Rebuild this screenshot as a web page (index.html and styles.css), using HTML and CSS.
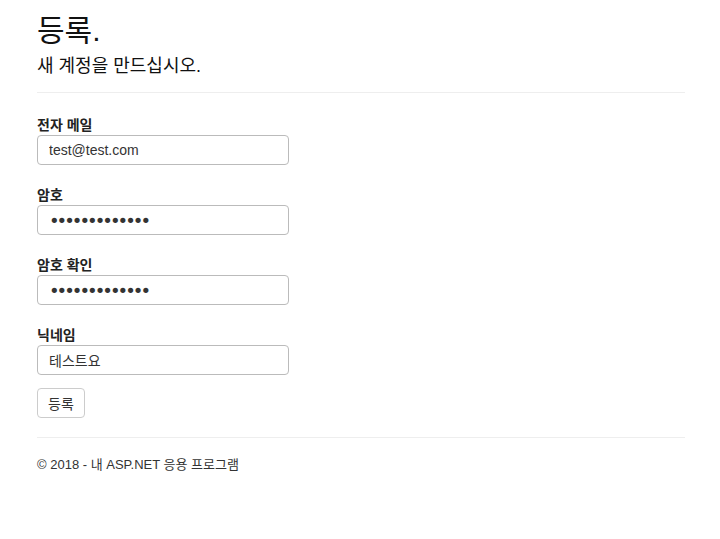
FILE: index.html
```html
<!DOCTYPE html>
<html lang="ko">
<head>
    <meta charset="UTF-8">
    <meta name="viewport" content="width=device-width, initial-scale=1.0">
    <title>등록 - 내 ASP.NET 응용 프로그램</title>
    <link rel="stylesheet" href="styles.css">
</head>
<body>
    <div class="container">
        <h2 class="title">등록.</h2>
        <h4 class="subtitle">새 계정을 만드십시오.</h4>
        <hr>
        <form class="register-form" onsubmit="return false">
            <div class="form-group">
                <label for="Email">전자 메일</label>
                <input class="form-control" type="text" id="Email" value="test@test.com">
            </div>
            <div class="form-group">
                <label for="Password">암호</label>
                <input class="form-control password" type="password" id="Password" value="abcdefghijklm">
            </div>
            <div class="form-group">
                <label for="ConfirmPassword">암호 확인</label>
                <input class="form-control password" type="password" id="ConfirmPassword" value="abcdefghijklm">
            </div>
            <div class="form-group last">
                <label for="NickName">닉네임</label>
                <input class="form-control" type="text" id="NickName" value="테스트요">
            </div>
            <button type="submit" class="btn">등록</button>
        </form>
        <hr class="footer-line">
        <footer>
            <p>&copy; 2018 - 내 ASP.NET 응용 프로그램</p>
        </footer>
    </div>
</body>
</html>
```

FILE: styles.css
```css
body {
    font-family: "Liberation Sans", "Noto Sans CJK KR", sans-serif;
    font-size: 14px;
    line-height: 20px;
    color: #333;
    background: #fff;
    margin: 0;
}
.container {
    width: 648px;
    margin-left: 37px;
}
.title {
    font-size: 30px;
    font-weight: normal;
    line-height: 33px;
    color: #111;
    margin: 14px 0 0;
}
.subtitle {
    font-size: 18px;
    font-weight: normal;
    line-height: 20px;
    color: #111;
    margin: 9px 0 0;
}
hr {
    border: 0;
    border-top: 1px solid #eee;
    margin: 16px 0 0;
}
.register-form {
    padding-top: 22px;
}
.form-group {
    margin-bottom: 20px;
}
.form-group.last {
    margin-bottom: 13px;
}
label {
    display: block;
    font-weight: bold;
    margin-bottom: 0;
    color: #222;
}
.form-control {
    display: block;
    box-sizing: border-box;
    width: 252px;
    height: 30px;
    padding: 4px 11px;
    font-family: inherit;
    font-size: 14px;
    color: #333;
    border: 1px solid #bbb;
    border-radius: 4px;
    background: #fff;
}
.form-control.password {
    font-family: "DejaVu Sans", sans-serif;
    font-size: 18px;
    letter-spacing: -3px;
    color: #333;
}
.btn {
    display: block;
    box-sizing: border-box;
    width: 48px;
    height: 30px;
    padding: 0;
    font-family: inherit;
    font-size: 14px;
    color: #333;
    background: #fff;
    border: 1px solid #ccc;
    border-radius: 4px;
    cursor: pointer;
}
.footer-line {
    margin-top: 19px;
}
footer p {
    font-size: 13px;
    margin: 17px 0 0;
}
```
